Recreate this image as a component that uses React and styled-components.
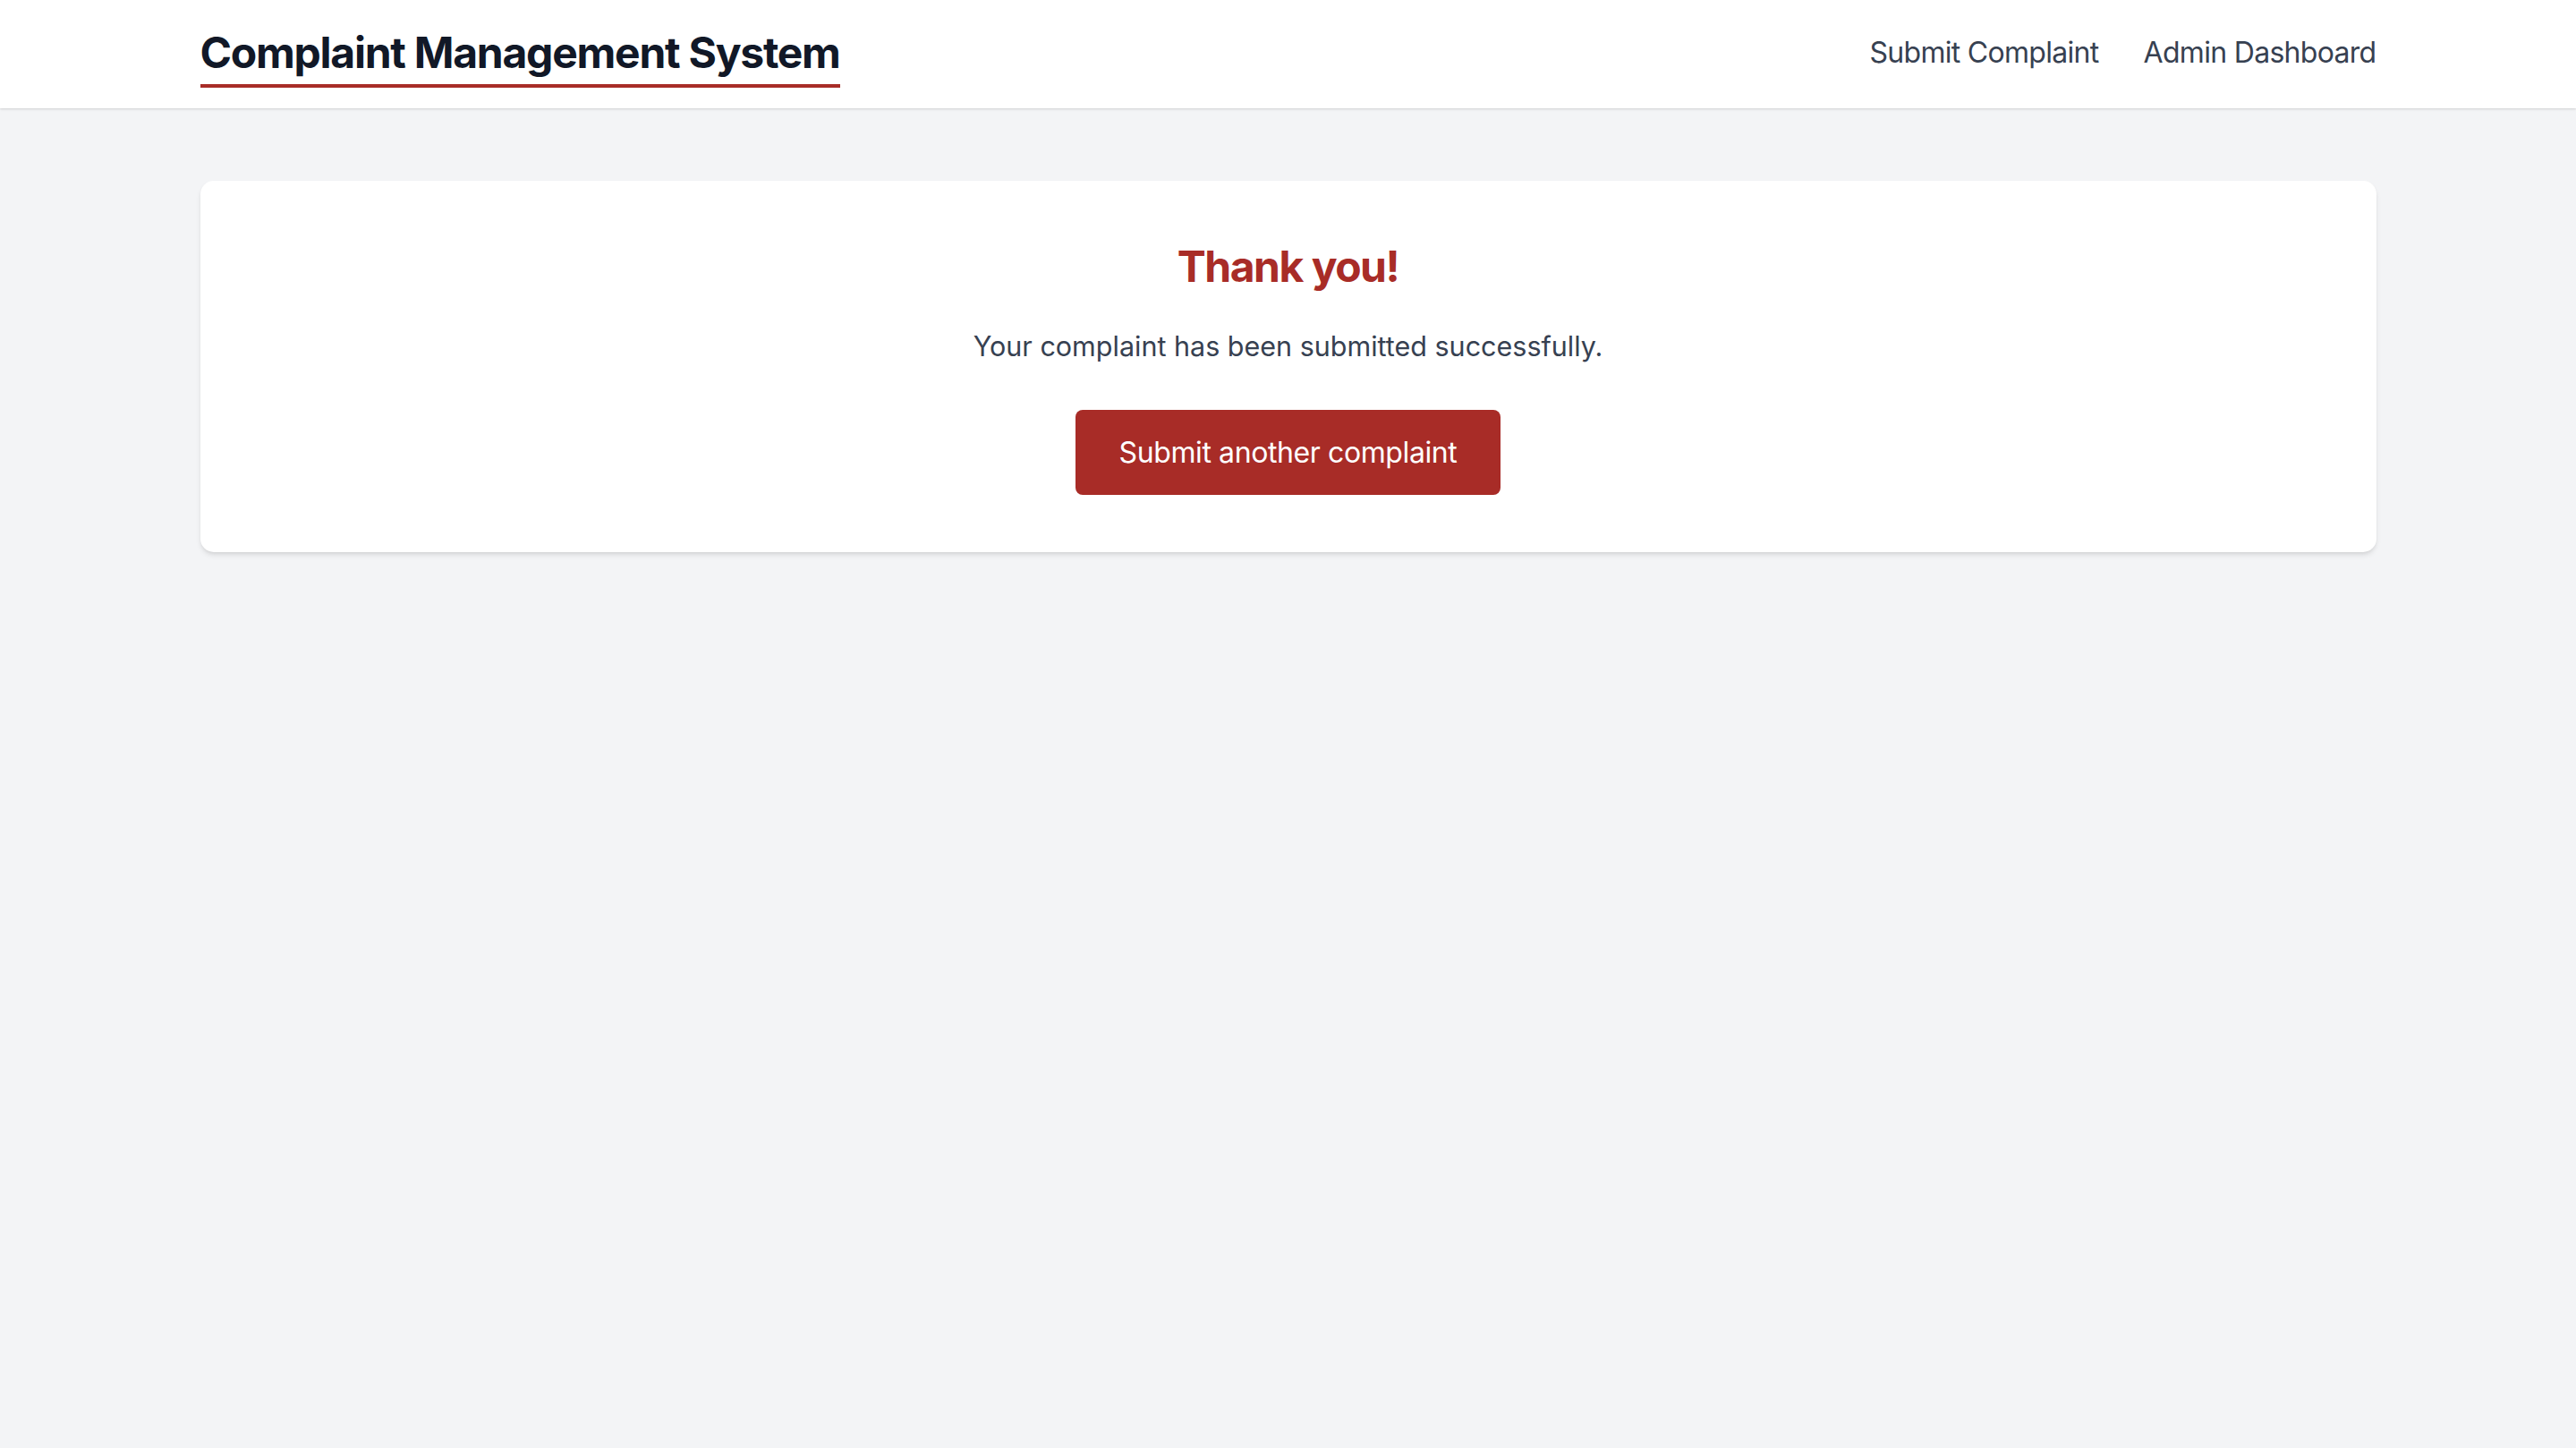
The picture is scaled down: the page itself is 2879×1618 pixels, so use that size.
import React from 'react';
import styled, { createGlobalStyle } from 'styled-components';

const GlobalStyle = createGlobalStyle`
  html, body {
    margin: 0;
    padding: 0;
    background: #f3f4f6;
    font-family: 'Inter', 'Liberation Sans', sans-serif;
    -webkit-font-smoothing: antialiased;
  }

  #root {
    min-height: 100vh;
  }
`;

const Page = styled.div`
  min-height: 100vh;
  background: #f3f4f6;
`;

const Header = styled.header`
  background: #ffffff;
  box-shadow: 0 1px 3px rgba(0, 0, 0, 0.1), 0 1px 2px rgba(0, 0, 0, 0.06);
`;

const HeaderInner = styled.div`
  max-width: 2432px;
  height: 121px;
  margin: 0 auto;
  display: flex;
  justify-content: space-between;
  align-items: flex-start;
  box-sizing: border-box;
`;

const Logo = styled.a`
  margin-top: 35px;
  padding-bottom: 11px;
  border-bottom: 4px solid #a82c27;
  font-size: 48px;
  line-height: 48px;
  font-weight: 700;
  letter-spacing: -1.25px;
  color: #111827;
  text-decoration: none;
`;

const Nav = styled.nav`
  margin-top: 42px;
  display: flex;
  gap: 50px;
`;

const NavLink = styled.a`
  font-size: 32px;
  line-height: 33px;
  letter-spacing: -0.7px;
  color: #374151;
  text-decoration: none;
`;

const Main = styled.main`
  max-width: 2432px;
  margin: 0 auto;
  padding-top: 81px;
`;

const Card = styled.section`
  background: #ffffff;
  border-radius: 15px;
  box-shadow: 0 4px 6px -1px rgba(0, 0, 0, 0.1), 0 2px 4px -2px rgba(0, 0, 0, 0.1);
  padding: 66px 60px 64px;
  display: flex;
  flex-direction: column;
  align-items: center;
  text-align: center;
`;

const Title = styled.h2`
  margin: 0;
  font-size: 48px;
  line-height: 60px;
  font-weight: 700;
  letter-spacing: -1.5px;
  color: #a82c27;
`;

const Message = styled.p`
  margin: 36px 0 0;
  font-size: 30.5px;
  line-height: 45px;
  color: #374151;
`;

const Button = styled.button`
  margin-top: 49px;
  height: 95px;
  padding: 0 49px;
  border: none;
  border-radius: 8px;
  background: #a82c27;
  color: #ffffff;
  font-family: inherit;
  font-size: 32px;
  font-weight: 400;
  letter-spacing: -0.4px;
  cursor: pointer;
`;

export default function App() {
  return (
    <Page>
      <GlobalStyle />
      <Header>
        <HeaderInner>
          <Logo href="#">Complaint Management System</Logo>
          <Nav>
            <NavLink href="#">Submit Complaint</NavLink>
            <NavLink href="#">Admin Dashboard</NavLink>
          </Nav>
        </HeaderInner>
      </Header>
      <Main>
        <Card>
          <Title>Thank you!</Title>
          <Message>Your complaint has been submitted successfully.</Message>
          <Button type="button">Submit another complaint</Button>
        </Card>
      </Main>
    </Page>
  );
}
